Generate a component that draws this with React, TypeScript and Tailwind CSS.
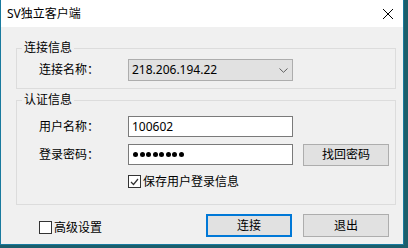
import React from 'react';

function CheckBox({ checked }: { checked?: boolean }) {
  return (
    <span className="w-[13px] h-[13px] border border-[#333333] bg-white flex items-center justify-center shrink-0">
      {checked && (
        <svg width="9" height="8" viewBox="0 0 9 8" fill="none">
          <path d="M1 4 L3.5 6.5 L8 1" stroke="#333333" strokeWidth="1.2" />
        </svg>
      )}
    </span>
  );
}

function Button({ label, primary }: { label: string; primary?: boolean }) {
  return (
    <button
      className={
        primary
          ? 'w-[86px] h-[23px] bg-[#e1e1e1] border-2 border-[#0078d7] text-[12px] text-black'
          : 'w-[86px] h-[23px] bg-[#e1e1e1] border border-[#adadad] text-[12px] text-black'
      }
    >
      {label}
    </button>
  );
}

export default function App() {
  return (
    <div className="w-[408px] h-[248px] bg-[#1b5e6b] font-['Noto_Sans','Noto_Sans_CJK_SC',sans-serif] text-[12px] leading-[16px] text-black overflow-hidden">
      <div className="w-[404px] h-[245px] flex flex-col border-x border-b border-[#197a9e] bg-[#f0f0f0]">
        {/* Title bar */}
        <div className="h-[27px] bg-white flex items-center justify-between pl-[6px] pr-[10px] shrink-0">
          <span>SV独立客户端</span>
          <svg width="10" height="10" viewBox="0 0 10 10" fill="none">
            <path d="M0 0 L10 10 M10 0 L0 10" stroke="#000" strokeWidth="1" />
          </svg>
        </div>

        {/* Body */}
        <div className="flex-1 flex flex-col pl-[15px] pr-[7px] pt-[13px]">
          {/* 连接信息 */}
          <fieldset className="border border-[#dcdcdc]">
            <legend className="ml-[5px] px-[2px] leading-[16px]">连接信息</legend>
            <div className="pl-[22px] pt-[3px] pb-[7px] flex items-center">
              <span className="w-[89px]">连接名称：</span>
              <div className="w-[165px] h-[22px] bg-[#e1e1e1] border border-[#adadad] flex items-center justify-between pl-[3px] pr-[4px]">
                <span>218.206.194.22</span>
                <svg width="9" height="5" viewBox="0 0 9 5" fill="none">
                  <path d="M0.5 0.5 L4.5 4.3 L8.5 0.5" stroke="#606060" strokeWidth="1" />
                </svg>
              </div>
            </div>
          </fieldset>

          {/* 认证信息 */}
          <fieldset className="border border-[#dcdcdc] mt-[3px]">
            <legend className="ml-[5px] px-[2px] leading-[16px]">认证信息</legend>
            <div className="pl-[22px] pt-[8px] pb-[16px] flex flex-col">
              <div className="flex items-center h-[21px]">
                <span className="w-[89px]">用户名称：</span>
                <div className="w-[165px] h-[21px] bg-white border border-[#7a7a7a] flex items-center pl-[3px]">
                  100602
                </div>
              </div>
              <div className="flex items-start h-[22px] mt-[7px]">
                <span className="w-[89px] h-[21px] flex items-center">登录密码：</span>
                <div className="w-[165px] h-[21px] bg-white border border-[#7a7a7a] flex items-center gap-[1.5px] pl-[4px]">
                  {Array.from({ length: 8 }).map((_, i) => (
                    <span key={i} className="w-[5px] h-[5px] rounded-full bg-black" />
                  ))}
                </div>
                <div className="ml-[10px] h-[22px] w-[86px] bg-[#e1e1e1] border border-[#adadad] flex items-center justify-center">
                  找回密码
                </div>
              </div>
              <div className="flex items-center h-[13px] mt-[9px] pl-[89px] gap-[2px]">
                <CheckBox checked />
                <span>保存用户登录信息</span>
              </div>
            </div>
          </fieldset>

          {/* Bottom row */}
          <div className="flex items-start justify-between mt-[9px] pl-[23px] pr-[7px]">
            <div className="flex items-center gap-[2px] mt-[7px] h-[13px]">
              <CheckBox />
              <span>高级设置</span>
            </div>
            <div className="flex gap-[11px]">
              <Button label="连接" primary />
              <Button label="退出" />
            </div>
          </div>
        </div>
      </div>
    </div>
  );
}
